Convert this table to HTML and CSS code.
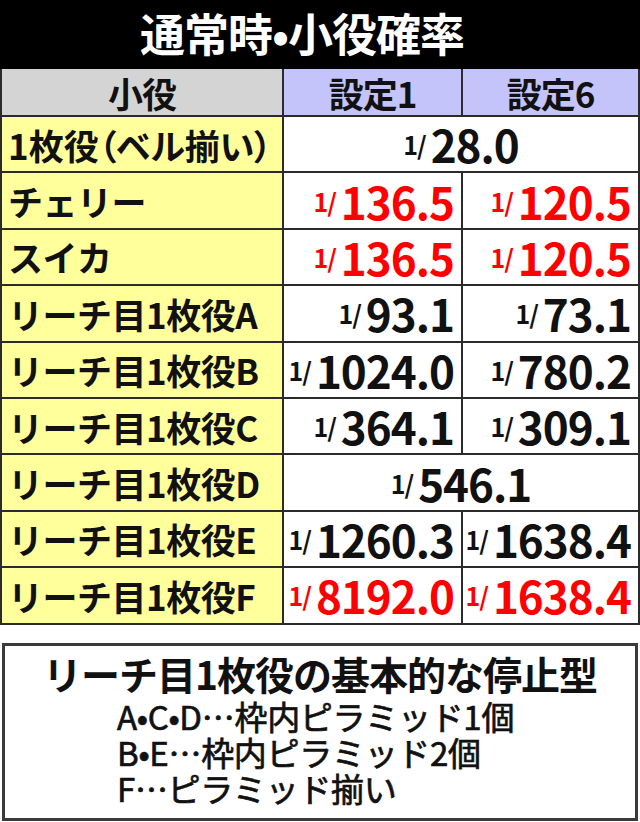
FILE: index.html
```html
<!DOCTYPE html>
<html lang="ja">
<head>
<meta charset="utf-8">
<link rel="stylesheet" href="styles.css">
</head>
<body>
<div class="sheet">
  <div class="title">通常時•小役確率</div>
  <div class="grid">
    <div class="hd hd-role">小役</div>
    <div class="hd hd-set">設定1</div>
    <div class="hd hd-set">設定6</div>

    <div class="lab lab-bell">1枚役（ベル揃い）</div>
    <div class="val span2"><span class="frac">1/</span><span class="num">28.0</span></div>

    <div class="lab">チェリー</div>
    <div class="val red"><span class="frac">1/</span><span class="num">136.5</span></div>
    <div class="val red"><span class="frac">1/</span><span class="num">120.5</span></div>

    <div class="lab">スイカ</div>
    <div class="val red"><span class="frac">1/</span><span class="num">136.5</span></div>
    <div class="val red"><span class="frac">1/</span><span class="num">120.5</span></div>

    <div class="lab">リーチ目1枚役A</div>
    <div class="val"><span class="frac">1/</span><span class="num">93.1</span></div>
    <div class="val"><span class="frac">1/</span><span class="num">73.1</span></div>

    <div class="lab">リーチ目1枚役B</div>
    <div class="val"><span class="frac">1/</span><span class="num">1024.0</span></div>
    <div class="val"><span class="frac">1/</span><span class="num">780.2</span></div>

    <div class="lab">リーチ目1枚役C</div>
    <div class="val"><span class="frac">1/</span><span class="num">364.1</span></div>
    <div class="val"><span class="frac">1/</span><span class="num">309.1</span></div>

    <div class="lab">リーチ目1枚役D</div>
    <div class="val span2"><span class="frac">1/</span><span class="num">546.1</span></div>

    <div class="lab">リーチ目1枚役E</div>
    <div class="val"><span class="frac">1/</span><span class="num">1260.3</span></div>
    <div class="val"><span class="frac">1/</span><span class="num">1638.4</span></div>

    <div class="lab">リーチ目1枚役F</div>
    <div class="val red"><span class="frac">1/</span><span class="num">8192.0</span></div>
    <div class="val red"><span class="frac">1/</span><span class="num">1638.4</span></div>
  </div>
</div>

<div class="note">
  <div class="note-title">リーチ目1枚役の基本的な停止型</div>
  <div class="note-lines">
    <div class="note-line">A•C•D…枠内ピラミッド1個</div>
    <div class="note-line">B•E…枠内ピラミッド2個</div>
    <div class="note-line">F…ピラミッド揃い</div>
  </div>
</div>
</body>
</html>
```

FILE: styles.css
```css
html, body {
  margin: 0;
  padding: 0;
  background: #ffffff;
}

body {
  width: 640px;
  font-family: "Noto Sans CJK JP", "Noto Sans", sans-serif;
  color: #111;
}

.sheet {
  background: #2b2b2b;
  padding: 0 2px 2px 2px;
}

.title {
  height: 69px;
  margin: 0 -2px;
  background: #000;
  color: #fff;
  font-weight: 700;
  font-size: 45px;
  line-height: 66px;
  text-align: center;
  padding-right: 36px;
  letter-spacing: -1px;
}

.grid {
  display: grid;
  grid-template-columns: 280px 177px 175px;
  grid-template-rows: 46px repeat(9, 54.4px);
  gap: 2px;
}

.hd {
  display: flex;
  align-items: center;
  justify-content: center;
  font-weight: 700;
  font-size: 35px;
  letter-spacing: -1px;
}

.hd-role {
  background: #d4d4d4;
}

.hd-set {
  background: #c4c4fa;
}

.lab {
  background: #ffff9c;
  display: flex;
  align-items: center;
  padding-left: 6px;
  font-weight: 700;
  font-size: 35px;
  letter-spacing: -0.5px;
  white-space: nowrap;
  overflow: hidden;
}

.lab-bell {
  font-feature-settings: "palt";
  letter-spacing: 0;
}

.val {
  background: #fff;
  display: flex;
  align-items: center;
  justify-content: flex-end;
  padding-right: 7px;
  font-weight: 700;
  white-space: nowrap;
  color: #111;
}

.val.span2 {
  grid-column: span 2;
  justify-content: center;
  padding-right: 0;
}

.val.red {
  color: #ff0000;
}

.frac {
  font-size: 25px;
  margin-right: 5px;
  letter-spacing: -1px;
}

.num {
  font-size: 44px;
  letter-spacing: -1px;
  line-height: 1;
}

.note {
  margin: 18px 2px 2px 2px;
  border: 3px solid #3a3a3a;
  height: 178px;
  box-sizing: border-box;
  display: flex;
  flex-direction: column;
}

.note-title {
  text-align: center;
  font-weight: 700;
  font-size: 39px;
  line-height: 46px;
  margin-top: 4px;
  letter-spacing: -1px;
}

.note-lines {
  padding-left: 112px;
  font-size: 33px;
  font-weight: 400;
  -webkit-text-stroke: 0.7px #111;
  margin-top: 2px;
}

.note-line {
  height: 36px;
  line-height: 36px;
  letter-spacing: -0.3px;
}
```
